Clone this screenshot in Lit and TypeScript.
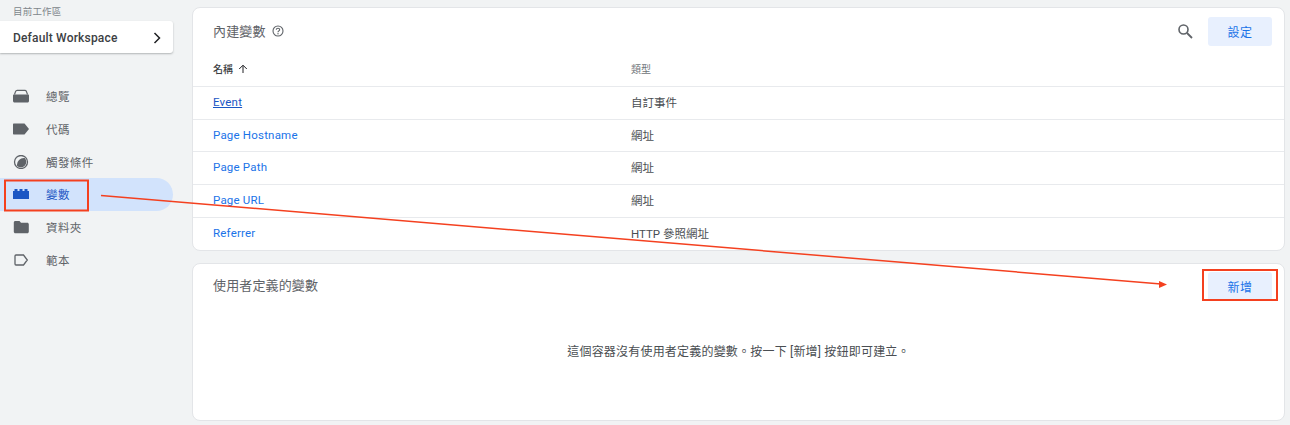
import { LitElement, html, css, svg } from "lit";
import { customElement } from "lit/decorators.js";

const navIcons: Record<string, unknown> = {
  overview: svg`<path d="M1.500 5.500L2.600 2.400Q3 1.300 4.200 1.300H11.800Q13 1.300 13.400 2.400L14.500 5.500" fill="none" stroke="#5f6368" stroke-width="1.200"/><path d="M1 5.500h14c.6 0 1 .4 1 1v5.500c0 .8-.7 1.500-1.500 1.500h-13C.7 13.500 0 12.800 0 12V6.500c0-.6.400-1 1-1z" fill="#5f6368"/>`,
  tag: svg`<path d="M1 1.500h10.500L16 7l-4.500 5.500H1c-.6 0-1-.4-1-1V2.500c0-.6.400-1 1-1z" fill="#5f6368"/>`,
  trigger: svg`<circle cx="8" cy="7" r="6.500" fill="none" stroke="#5f6368" stroke-width="1.300"/><path d="M4 10.700A5.300 5.300 0 0 0 11.700 3A7 7 0 0 0 4 10.700z" fill="#5f6368"/>`,
  variable: svg`<path d="M0 4h1.500V2h3v2h2V2h3v2h2V2h3v2H16v8H0z" fill="#1a56c4"/>`,
  folder: svg`<path d="M2.300 1h4.200l1.500 1.800h6.300c.8 0 1.500.7 1.500 1.500v7.400c0 .8-.7 1.500-1.500 1.500H2.300c-.8 0-1.500-.7-1.500-1.500V2.500C.8 1.700 1.500 1 2.300 1z" fill="#5f6368"/>`,
  template: svg`<path d="M3 2h7.500L14.300 7l-3.800 5H3c-.6 0-1-.4-1-1V3c0-.6.400-1 1-1z" fill="none" stroke="#5f6368" stroke-width="1.300"/>`,
};

const navItems = [
  { key: "overview", label: "總覽" },
  { key: "tag", label: "代碼" },
  { key: "trigger", label: "觸發條件" },
  { key: "variable", label: "變數", active: true },
  { key: "folder", label: "資料夾" },
  { key: "template", label: "範本" },
];

const rows = [
  { name: "Event", type: "自訂事件", visited: true },
  { name: "Page Hostname", type: "網址" },
  { name: "Page Path", type: "網址" },
  { name: "Page URL", type: "網址" },
  { name: "Referrer", type: "HTTP 參照網址" },
];

@customElement("app-root")
export class AppRoot extends LitElement {
  static styles = css`
    :host {
      display: block;
      position: relative;
      width: 1290px;
      height: 425px;
      overflow: hidden;
      background: #f1f3f4;
      color: #4a4e52;
      font-family: Roboto, "Noto Sans CJK TC", sans-serif;
      font-size: 12px;
    }
    .page {
      display: grid;
      grid-template-columns: 173px 1093px;
      column-gap: 19px;
      height: 425px;
    }
    .label {
      height: 21px;
      padding: 6px 0 0 13px;
      box-sizing: border-box;
      font-size: 9.500px;
      line-height: 11px;
      letter-spacing: 0.200px;
      color: #80868b;
    }
    .workspace {
      height: 32px;
      display: flex;
      align-items: center;
      justify-content: space-between;
      padding: 2px 11px 0 13px;
      box-sizing: border-box;
      background: #fff;
      border-radius: 0 3px 3px 0;
      box-shadow: 0 1px 2px rgba(60, 64, 67, 0.35);
      font-size: 12px;
      font-weight: 500;
      letter-spacing: 0.180px;
      color: #3c4043;
    }
    nav {
      margin-top: 27px;
      display: flex;
      flex-direction: column;
    }
    .item {
      height: 32.700px;
      display: flex;
      align-items: center;
      gap: 17px;
      padding-left: 13px;
      color: #5f6368;
      font-size: 11.500px;
      letter-spacing: 0.400px;
    }
    .item.active {
      color: #1a56c4;
      background: #d2e3fc;
      border-radius: 0 17px 17px 0;
    }
    .item svg { display: block; flex: none; }
    main {
      padding-top: 7px;
      display: flex;
      flex-direction: column;
      gap: 12px;
    }
    .card {
      background: #fff;
      border: 1px solid #e3e5e8;
      border-radius: 8px;
      box-sizing: border-box;
    }
    .builtin { padding-bottom: 1px; }
    .head {
      display: flex;
      align-items: center;
      padding: 0 12px 0 20px;
    }
    .builtin .head { height: 45px; padding-top: 1px; box-sizing: border-box; }
    .title {
      font-size: 13px;
      letter-spacing: 0.130px;
      color: #5f6368;
      position: relative;
      top: -1px;
    }
    .custom .title { top: -2px; }
    .help { margin-left: 6px; display: block; }
    .spacer { flex: 1; }
    .search { display: block; margin-right: 15px; }
    .btn {
      width: 64px;
      height: 29px;
      display: flex;
      align-items: center;
      justify-content: center;
      background: #e8f0fe;
      color: #1a73e8;
      border-radius: 3px;
      font-size: 12px;
      letter-spacing: 0.500px;
    }
    .row {
      display: grid;
      grid-template-columns: 418px 1fr;
      align-items: center;
      height: 32.700px;
      padding: 0 0 2px 20px;
      box-sizing: border-box;
      border-top: 1px solid #e8eaed;
      font-size: 11.500px;
    }
    .thead {
      height: 33px;
      border-top: none;
      font-size: 10px;
    }
    .thead .name {
      display: flex;
      align-items: center;
      gap: 5px;
      font-weight: 500;
      color: #3c4043;
    }
    .thead .type { color: #70757a; }
    .link { color: #1a73e8; letter-spacing: 0.200px; }
    .link.visited { color: #1a56c4; text-decoration: underline; }
    .custom { height: 158px; }
    .custom .head { padding-top: 8px; height: 29px; }
    .empty {
      margin-top: 41px;
      text-align: center;
      font-size: 12px;
      letter-spacing: 0.200px;
    }
    .overlay {
      position: absolute;
      left: 0;
      top: 0;
      pointer-events: none;
    }
  `;

  render() {
    return html`
      <div class="page">
        <aside>
          <div class="label">目前工作區</div>
          <div class="workspace">
            <span>Default Workspace</span>
            <svg width="10" height="12" viewBox="0 0 10 12"><path d="M2.500 1l5 5-5 5" fill="none" stroke="#202124" stroke-width="1.500"/></svg>
          </div>
          <nav>
            ${navItems.map(
              (n) => html`<div class="item ${n.active ? "active" : ""}">
                <svg width="16" height="14" viewBox="0 0 16 14">${navIcons[n.key]}</svg>
                <span>${n.label}</span>
              </div>`
            )}
          </nav>
        </aside>
        <main>
          <section class="card builtin">
            <div class="head">
              <span class="title">內建變數</span>
              <svg class="help" width="12" height="12" viewBox="0 0 12 12">
                <circle cx="6" cy="6" r="5" fill="none" stroke="#5f6368" stroke-width="1.100"/>
                <path d="M4.300 4.800C4.300 3.800 5 3.200 6 3.200s1.700.6 1.700 1.500c0 1.100-1.700 1.300-1.700 2.500" fill="none" stroke="#5f6368" stroke-width="1.100"/>
                <circle cx="6" cy="8.700" r=".7" fill="#5f6368"/>
              </svg>
              <span class="spacer"></span>
              <svg class="search" width="16" height="16" viewBox="0 0 16 16">
                <circle cx="6.500" cy="6.500" r="4.500" fill="none" stroke="#5f6368" stroke-width="1.600"/>
                <path d="M10 10l5 5" stroke="#5f6368" stroke-width="1.800"/>
              </svg>
              <div class="btn">設定</div>
            </div>
            <div class="row thead">
              <span class="name">名稱
                <svg width="10" height="10" viewBox="0 0 10 10"><path d="M5 9V1.500M1.200 5L5 1.200 8.800 5" fill="none" stroke="#202124" stroke-width="1"/></svg>
              </span>
              <span class="type">類型</span>
            </div>
            ${rows.map(
              (r) => html`<div class="row">
                <span class="link ${r.visited ? "visited" : ""}">${r.name}</span>
                <span>${r.type}</span>
              </div>`
            )}
          </section>
          <section class="card custom">
            <div class="head">
              <span class="title">使用者定義的變數</span>
              <span class="spacer"></span>
              <div class="btn">新增</div>
            </div>
            <div class="empty">這個容器沒有使用者定義的變數。按一下 [新增] 按鈕即可建立。</div>
          </section>
        </main>
      </div>
      <svg class="overlay" width="1290" height="425" viewBox="0 0 1290 425">
        <rect x="5" y="180.500" width="83" height="30" fill="none" stroke="#f4401f" stroke-width="2"/>
        <rect x="1203" y="270" width="74" height="30" fill="none" stroke="#f4401f" stroke-width="2"/>
        <path d="M101 195.500L1161 284" stroke="#f4401f" stroke-width="1.500"/>
        <path d="M1167 284.500l-8-3.600v7z" fill="#f4401f"/>
      </svg>
    `;
  }
}
